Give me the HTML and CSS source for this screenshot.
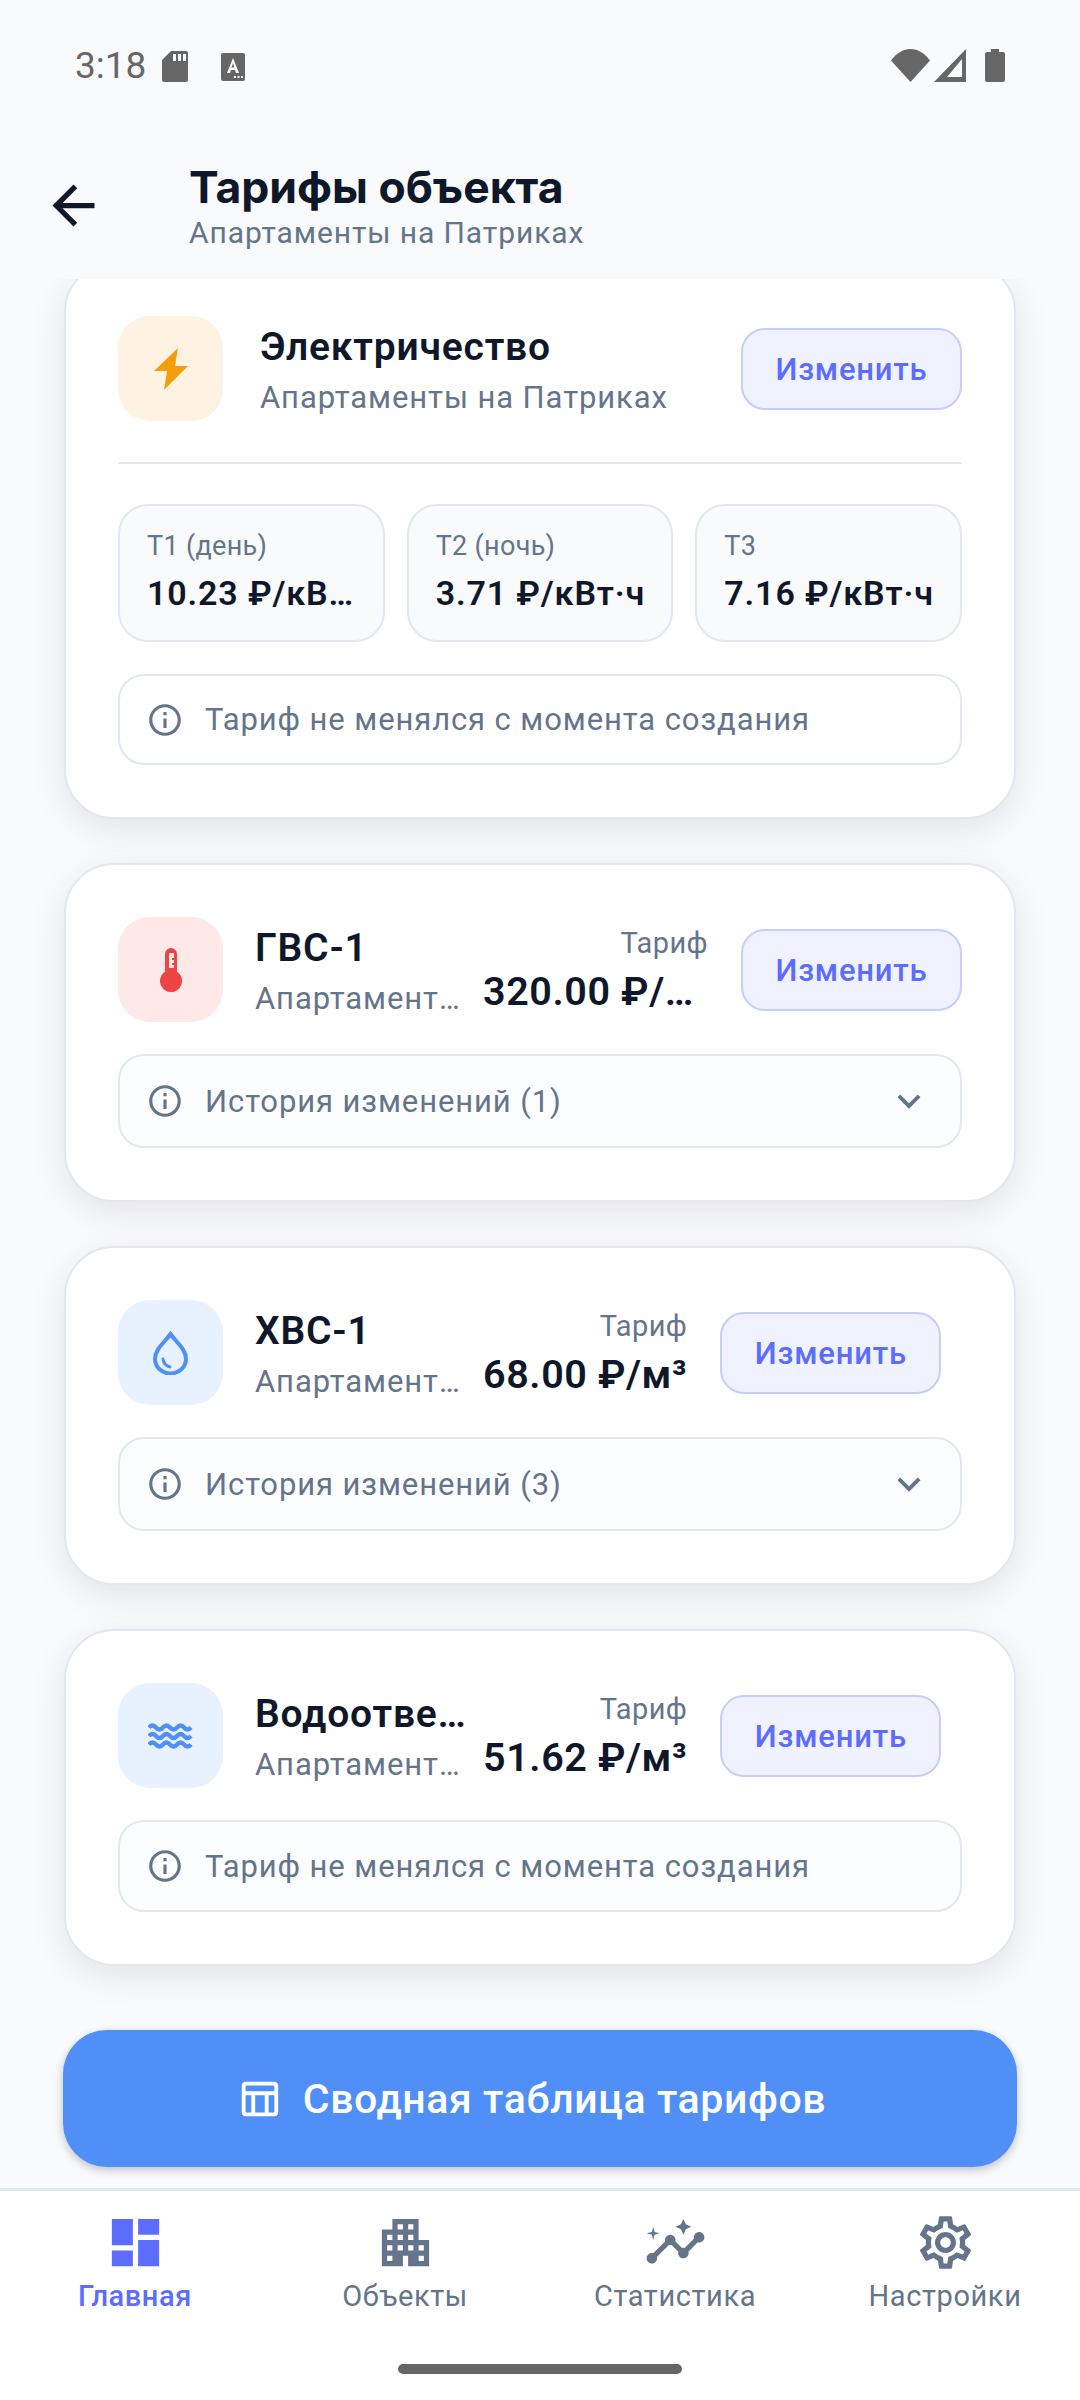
FILE: index.html
```html
<!DOCTYPE html>
<html lang="ru">
<head>
  <meta charset="UTF-8">
  <title>Тарифы объекта</title>
  <link rel="stylesheet" href="styles.css">
</head>
<body>
  <div class="screen">

    <div class="statusbar">
      <span class="clock">3:18</span>
      <svg class="st-sd" viewBox="0 0 26 31"><path d="M9 0h15a2 2 0 0 1 2 2v27a2 2 0 0 1-2 2H2a2 2 0 0 1-2-2V9z" fill="#666"/><path d="M11 3h3v7h-3zM16 3h3v7h-3zM21 3h3v7h-3z" fill="#f8fafc"/></svg>
      <svg class="st-a" viewBox="0 0 24 28"><rect width="24" height="28" rx="2" fill="#666"/><path d="M12 5l6 15h-3l-1-3h-4l-1 3H6zm0 5l-1.300 4.500h2.600z" fill="#f8fafc"/><path d="M13 23h2v2h-2zM16.500 23h2v2h-2zM20 23h2v2h-2z" fill="#f8fafc"/></svg>
      <span class="st-gap"></span>
      <svg class="st-wifi" viewBox="0 0 39 33"><path d="M19.500 33L0 11.500C5 4.500 12 0 19.500 0S34 4.500 39 11.500z" fill="#666"/></svg>
      <svg class="st-signal" viewBox="0 0 32 33"><path fill-rule="evenodd" d="M32 0v33H0zM28 10L13 28h15z" fill="#666"/></svg>
      <svg class="st-batt" viewBox="0 0 20 33"><path d="M6 0h8v3h4a2 2 0 0 1 2 2v26a2 2 0 0 1-2 2H2a2 2 0 0 1-2-2V5a2 2 0 0 1 2-2h4z" fill="#666"/></svg>
    </div>

    <div class="topbar">
      <svg class="back" viewBox="0 0 24 24"><path d="M20 11H7.830l5.590-5.590L12 4l-8 8 8 8 1.410-1.410L7.830 13H20v-2z"/></svg>
      <div class="topbar-text">
        <div class="page-title">Тарифы объекта</div>
        <div class="page-sub">Апартаменты на Патриках</div>
      </div>
    </div>

    <div class="content">
      <div class="list">

        <div class="card">
          <div class="card-head">
            <div class="type-icon amber">
              <svg viewBox="0 0 36 44" class="ic-bolt"><path d="M25 1L1 24h13l-3 19 24-24H22z"/></svg>
            </div>
            <div class="name-col wide">
              <div class="name">Электричество</div>
              <div class="place">Апартаменты на Патриках</div>
            </div>
            <button class="edit">Изменить</button>
          </div>
          <div class="divider"></div>
          <div class="rates">
            <div class="rate">
              <div class="rate-label">T1 (день)</div>
              <div class="rate-value">10.23 ₽/кВт·ч</div>
            </div>
            <div class="rate">
              <div class="rate-label">T2 (ночь)</div>
              <div class="rate-value">3.71 ₽/кВт·ч</div>
            </div>
            <div class="rate">
              <div class="rate-label">T3</div>
              <div class="rate-value">7.16 ₽/кВт·ч</div>
            </div>
          </div>
          <div class="note plain">
            <svg class="info" viewBox="0 0 24 24"><path d="M11 7h2v2h-2zm0 4h2v6h-2zm1-9C6.480 2 2 6.480 2 12s4.480 10 10 10 10-4.480 10-10S17.520 2 12 2zm0 18c-4.410 0-8-3.590-8-8s3.590-8 8-8 8 3.590 8 8-3.590 8-8 8z"/></svg>
            <span>Тариф не менялся с момента создания</span>
          </div>
        </div>

        <div class="card">
          <div class="card-head">
            <div class="type-icon red">
              <svg viewBox="0 0 22 44" class="ic-therm"><path fill-rule="evenodd" d="M11 0a6 6 0 0 1 6 6v17.800a11 11 0 1 1-12 0V6a6 6 0 0 1 6-6zM9 5v15h5v-3h-2v-2h2v-3h-2v-2h2V5z"/></svg>
            </div>
            <div class="name-col">
              <div class="name">ГВС-1</div>
              <div class="place">Апартаменты на Патриках</div>
            </div>
            <div class="price">
              <div class="price-label">Тариф</div>
              <div class="price-value">320.00 ₽/кВт·ч</div>
            </div>
            <button class="edit">Изменить</button>
          </div>
          <div class="note history">
            <svg class="info" viewBox="0 0 24 24"><path d="M11 7h2v2h-2zm0 4h2v6h-2zm1-9C6.480 2 2 6.480 2 12s4.480 10 10 10 10-4.480 10-10S17.520 2 12 2zm0 18c-4.410 0-8-3.590-8-8s3.590-8 8-8 8 3.590 8 8-3.590 8-8 8z"/></svg>
            <span>История изменений (1)</span>
            <svg class="chev" viewBox="0 0 24 24"><path d="M16.590 8.590L12 13.170 7.410 8.590 6 10l6 6 6-6z"/></svg>
          </div>
        </div>

        <div class="card">
          <div class="card-head">
            <div class="type-icon blue">
              <svg viewBox="0 0 35 44" class="ic-drop"><path d="M17.500 3C12 11 2 18 2 28a15.500 14.500 0 0 0 31 0C33 18 23 11 17.500 3z" fill="none" stroke-width="4"/><path d="M10 28c.5 4 3 7 7 8" fill="none" stroke-width="3" stroke-linecap="round"/></svg>
            </div>
            <div class="name-col">
              <div class="name">ХВС-1</div>
              <div class="place">Апартаменты на Патриках</div>
            </div>
            <div class="price">
              <div class="price-label">Тариф</div>
              <div class="price-value">68.00 ₽/м³</div>
            </div>
            <button class="edit">Изменить</button>
          </div>
          <div class="note history">
            <svg class="info" viewBox="0 0 24 24"><path d="M11 7h2v2h-2zm0 4h2v6h-2zm1-9C6.480 2 2 6.480 2 12s4.480 10 10 10 10-4.480 10-10S17.520 2 12 2zm0 18c-4.410 0-8-3.590-8-8s3.590-8 8-8 8 3.590 8 8-3.590 8-8 8z"/></svg>
            <span>История изменений (3)</span>
            <svg class="chev" viewBox="0 0 24 24"><path d="M16.590 8.590L12 13.170 7.410 8.590 6 10l6 6 6-6z"/></svg>
          </div>
        </div>

        <div class="card">
          <div class="card-head">
            <div class="type-icon blue">
              <svg viewBox="0 0 45 26" class="ic-waves"><path d="M1 4.500q3.500-4 7 0t7 0 7 0 7 0 7 0 7 0M1 13q3.500-4 7 0t7 0 7 0 7 0 7 0 7 0M1 21.500q3.500-4 7 0t7 0 7 0 7 0 7 0 7 0" fill="none" stroke-width="4.300"/></svg>
            </div>
            <div class="name-col">
              <div class="name">Водоотведение</div>
              <div class="place">Апартаменты на Патриках</div>
            </div>
            <div class="price">
              <div class="price-label">Тариф</div>
              <div class="price-value">51.62 ₽/м³</div>
            </div>
            <button class="edit">Изменить</button>
          </div>
          <div class="note tinted">
            <svg class="info" viewBox="0 0 24 24"><path d="M11 7h2v2h-2zm0 4h2v6h-2zm1-9C6.480 2 2 6.480 2 12s4.480 10 10 10 10-4.480 10-10S17.520 2 12 2zm0 18c-4.410 0-8-3.590-8-8s3.590-8 8-8 8 3.590 8 8-3.590 8-8 8z"/></svg>
            <span>Тариф не менялся с момента создания</span>
          </div>
        </div>

      </div>

      <button class="summary">
        <svg viewBox="0 0 24 24"><path d="M20 3H5c-1.100 0-2 .9-2 2v14c0 1.100.9 2 2 2h15c1.100 0 2-.9 2-2V5c0-1.100-.9-2-2-2zm0 2v3H5V5h15zm-5 14h-5v-9h5v9zM5 10h3v9H5v-9zm12 9v-9h3v9h-3z"/></svg>
        <span>Сводная таблица тарифов</span>
      </button>
    </div>

    <div class="nav">
      <div class="nav-item active">
        <svg viewBox="0 0 24 24"><path d="M3 13h8V3H3v10zm0 8h8v-6H3v6zm10 0h8V11h-8v10zm0-18v6h8V3h-8z"/></svg>
        <span>Главная</span>
      </div>
      <div class="nav-item">
        <svg viewBox="0 0 24 24"><path d="M17 11V3H7v4H3v14h8v-4h2v4h8V11h-4zM7 19H5v-2h2v2zm0-4H5v-2h2v2zm0-4H5V9h2v2zm4 4H9v-2h2v2zm0-4H9V9h2v2zm0-4H9V5h2v2zm4 8h-2v-2h2v2zm0-4h-2V9h2v2zm0-4h-2V5h2v2zm4 12h-2v-2h2v2zm0-4h-2v-2h2v2z"/></svg>
        <span>Объекты</span>
      </div>
      <div class="nav-item">
        <svg viewBox="0 0 24 24"><path d="M21 8c-1.450 0-2.260 1.440-1.930 2.510l-3.550 3.560c-.3-.09-.74-.09-1.040 0l-2.550-2.550C12.270 10.450 11.460 9 10 9c-1.450 0-2.270 1.440-1.930 2.520l-4.560 4.550C2.440 15.740 1 16.550 1 18c0 1.100.9 2 2 2 1.450 0 2.260-1.440 1.930-2.510l4.550-4.560c.3.09.74.09 1.040 0l2.550 2.550C12.730 16.550 13.540 18 15 18c1.450 0 2.270-1.440 1.930-2.520l3.560-3.550c1.070.33 2.510-.48 2.510-1.930 0-1.100-.9-2-2-2z"/><path d="M15 9l.94-2.070L18 6l-2.060-.93L15 3l-.92 2.070L12 6l2.080.93z"/><path d="M3.500 11L4 9l2-.5L4 8l-.5-2L3 8l-2 .5L3 9z"/></svg>
        <span>Статистика</span>
      </div>
      <div class="nav-item">
        <svg viewBox="0 0 24 24"><path d="M19.430 12.980c.04-.32.07-.64.07-.98 0-.34-.03-.66-.07-.98l2.110-1.650c.19-.15.24-.42.12-.64l-2-3.460c-.09-.16-.26-.25-.44-.25-.06 0-.12.01-.17.03l-2.490 1c-.52-.4-1.080-.73-1.690-.98l-.38-2.650C14.460 2.180 14.250 2 14 2h-4c-.25 0-.46.18-.49.42l-.38 2.650c-.61.25-1.170.59-1.690.98l-2.490-1c-.06-.02-.12-.03-.18-.03-.17 0-.34.09-.43.25l-2 3.460c-.13.22-.07.49.12.64l2.110 1.650c-.04.32-.07.65-.07.98 0 .33.03.66.07.98l-2.110 1.650c-.19.15-.24.42-.12.64l2 3.460c.09.16.26.25.44.25.06 0 .12-.01.17-.03l2.490-1c.52.4 1.080.73 1.690.98l.38 2.650c.03.24.24.42.49.42h4c.25 0 .46-.18.49-.42l.38-2.650c.61-.25 1.170-.59 1.690-.98l2.490 1c.06.02.12.03.18.03.17 0 .34-.09.43-.25l2-3.460c.12-.22.07-.49-.12-.64l-2.110-1.650zm-1.980-1.710c.04.31.05.52.05.73 0 .21-.02.43-.05.73l-.14 1.130.89.7 1.080.84-.7 1.210-1.270-.51-1.040-.42-.9.68c-.43.32-.84.56-1.250.73l-1.060.43-.16 1.130-.2 1.350h-1.400l-.19-1.350-.16-1.130-1.060-.43c-.43-.18-.83-.41-1.230-.71l-.91-.7-1.060.43-1.270.51-.7-1.210 1.080-.84.89-.7-.14-1.130c-.03-.31-.05-.54-.05-.74s.02-.43.05-.73l.14-1.130-.89-.7-1.080-.84.7-1.210 1.270.51 1.040.42.9-.68c.43-.32.84-.56 1.250-.73l1.060-.43.16-1.130.2-1.350h1.390l.19 1.350.16 1.130 1.060.43c.43.18.83.41 1.230.71l.91.7 1.060-.43 1.270-.51.7 1.210-1.070.85-.89.7.14 1.130zM12 8c-2.210 0-4 1.790-4 4s1.790 4 4 4 4-1.790 4-4-1.790-4-4-4zm0 6c-1.100 0-2-.9-2-2s.9-2 2-2 2 .9 2 2-.9 2-2 2z"/></svg>
        <span>Настройки</span>
      </div>
    </div>

    <div class="gesture"><div class="gesture-bar"></div></div>

  </div>
</body>
</html>
```

FILE: styles.css
```css
:root {
  --ink: #0f172a;
  --muted: #64748b;
  --line: #e2e8f0;
  --indigo: #5b6cff;
  --page: #f8fafc;
}

* {
  box-sizing: border-box;
}

body {
  margin: 0;
  font-family: Roboto, sans-serif;
  background-color: var(--page);
}

.screen {
  width: 1080px;
  height: 2400px;
  display: flex;
  flex-direction: column;
  overflow: hidden;
  background-color: var(--page);
}

/* status bar */
.statusbar {
  height: 132px;
  flex-shrink: 0;
  display: flex;
  align-items: flex-start;
  padding: 49px 75px 0 75px;
  position: relative;
  z-index: 2;
  background-color: var(--page);
}

.clock {
  font-size: 37px;
  line-height: 34px;
  color: #666;
  width: 87px;
}

.st-sd {
  width: 26px;
  height: 31px;
  margin-top: 2px;
  margin-right: 33px;
}

.st-a {
  width: 24px;
  height: 28px;
  margin-top: 4px;
}

.st-gap {
  flex: 1;
}

.st-wifi {
  width: 39px;
  height: 33px;
  margin-right: 4px;
}

.st-signal {
  width: 32px;
  height: 33px;
  margin-right: 19px;
}

.st-batt {
  width: 20px;
  height: 33px;
}

/* header */
.topbar {
  height: 147px;
  flex-shrink: 0;
  display: flex;
  align-items: flex-start;
  position: relative;
  z-index: 2;
  background-color: var(--page);
  padding-left: 42px;
}

.back {
  width: 63px;
  height: 63px;
  fill: var(--ink);
  margin-top: 42px;
  margin-right: 84px;
}

.topbar-text {
  padding-top: 26px;
}

.page-title {
  font-family: Inter, sans-serif;
  font-size: 44.5px;
  line-height: 58px;
  font-weight: 700;
  color: var(--ink);
}

.page-sub {
  font-size: 30px;
  line-height: 34px;
  color: var(--muted);
  letter-spacing: 0.9px;
}

/* scrolled content */
.content {
  flex: 1;
  min-height: 0;
  display: flex;
  flex-direction: column;
  padding: 0 63px;
}

.list {
  display: flex;
  flex-direction: column;
  gap: 44px;
  margin-top: -17px;
  padding: 0 1px;
}

.card {
  background-color: #fff;
  border: 2px solid var(--line);
  border-radius: 50px;
  padding: 52px;
  box-shadow: 0 10px 36px rgba(0, 0, 0, 0.09);
}

.card-head {
  display: flex;
  align-items: center;
}

.type-icon {
  width: 105px;
  height: 105px;
  flex-shrink: 0;
  border-radius: 32px;
  display: flex;
  align-items: center;
  justify-content: center;
}

.amber { background-color: #fef3e2; }
.red { background-color: #fee8e8; }
.blue { background-color: #e8f1fe; }

.ic-bolt {
  width: 36px;
  height: 44px;
  fill: #f59e0b;
}

.ic-therm {
  width: 22px;
  height: 44px;
  fill: #ef4444;
}

.ic-drop {
  width: 35px;
  height: 44px;
  stroke: #4f8ff7;
}

.ic-waves {
  width: 45px;
  height: 26px;
  stroke: #4f8ff7;
}

.name-col {
  width: 244px;
  flex-shrink: 0;
  min-width: 0;
  padding-left: 32px;
  padding-top: 3px;
}

.name-col.wide {
  flex: 1;
  padding-left: 37px;
}

.name {
  font-size: 39px;
  line-height: 56px;
  font-weight: 600;
  letter-spacing: 0.8px;
  color: var(--ink);
  white-space: nowrap;
  overflow: hidden;
  text-overflow: ellipsis;
}

.place {
  font-size: 31px;
  line-height: 46px;
  letter-spacing: 0.9px;
  color: var(--muted);
  white-space: nowrap;
  overflow: hidden;
  text-overflow: ellipsis;
}

.price {
  margin-left: 16px;
  max-width: 225px;
  min-width: 0;
  padding-top: 3px;
  text-align: right;
  flex-shrink: 0;
}

.price-label {
  font-size: 29px;
  line-height: 38px;
  letter-spacing: 0.4px;
  color: var(--muted);
}

.price-value {
  margin-top: 3px;
  font-size: 39.5px;
  line-height: 54px;
  font-weight: 600;
  letter-spacing: 0.6px;
  color: var(--ink);
  white-space: nowrap;
  overflow: hidden;
  text-overflow: ellipsis;
}

.edit {
  width: 221px;
  height: 82px;
  flex-shrink: 0;
  margin-left: 33px;
  padding-top: 3px;
  border: 2px solid #c7cdff;
  border-radius: 24px;
  background-color: #f1f2ff;
  color: var(--indigo);
  font-family: inherit;
  font-size: 31px;
  font-weight: 500;
  letter-spacing: 0.8px;
}

.name-col.wide + .edit {
  margin-left: 0;
}

.divider {
  height: 2px;
  background-color: var(--line);
  margin: 41px 0 40px;
}

.rates {
  display: grid;
  grid-template-columns: repeat(3, 1fr);
  gap: 22px;
  margin-bottom: 32px;
}

.rate {
  height: 138px;
  min-width: 0;
  border: 2px solid var(--line);
  border-radius: 30px;
  background-color: var(--page);
  padding: 23px 20px 0 27px;
}

.rate-label {
  font-size: 27px;
  line-height: 34px;
  letter-spacing: 0.3px;
  color: var(--muted);
}

.rate-value {
  margin-top: 8px;
  font-size: 34px;
  line-height: 44px;
  font-weight: 600;
  letter-spacing: 0.85px;
  color: var(--ink);
  white-space: nowrap;
  overflow: hidden;
  text-overflow: ellipsis;
}

.note {
  display: flex;
  align-items: center;
  border: 2px solid var(--line);
  border-radius: 26px;
  padding: 0 28px 0 26px;
  font-size: 31px;
  letter-spacing: 0.9px;
  color: var(--muted);
}

.card-head + .note {
  margin-top: 32px;
}

.plain {
  height: 91px;
  background-color: #fff;
}

.tinted {
  height: 92px;
  background-color: #fcfdfe;
}

.history {
  height: 94px;
  background-color: #fcfdfe;
}

.info {
  width: 38px;
  height: 38px;
  fill: var(--muted);
  flex-shrink: 0;
  margin-right: 21px;
}

.chev {
  width: 46px;
  height: 46px;
  fill: var(--muted);
  margin-left: auto;
}

/* summary button */
.summary {
  height: 137px;
  flex-shrink: 0;
  margin-top: 64px;
  padding: 0 18px 0 0;
  border: none;
  border-radius: 44px;
  background-color: #4f8ff7;
  box-shadow: 0 3px 8px rgba(15, 23, 42, 0.25);
  color: #fff;
  display: flex;
  align-items: center;
  justify-content: center;
  font-family: inherit;
  font-size: 41px;
  font-weight: 500;
  letter-spacing: 0.6px;
}

.summary svg {
  width: 46px;
  height: 46px;
  fill: #fff;
  margin-right: 21px;
}

/* bottom nav */
.nav {
  height: 132px;
  flex-shrink: 0;
  display: grid;
  grid-template-columns: repeat(4, 1fr);
  border-top: 3px solid var(--line);
  background-color: #fff;
  position: relative;
  z-index: 2;
  padding-top: 20px;
}

.nav-item {
  display: flex;
  flex-direction: column;
  align-items: center;
  color: var(--muted);
  font-size: 29px;
  line-height: 36px;
  letter-spacing: 0.6px;
}

.nav-item svg {
  width: 63px;
  height: 63px;
  fill: var(--muted);
  margin-bottom: 4px;
}

.nav-item.active {
  color: var(--indigo);
  font-weight: 500;
}

.nav-item.active svg {
  fill: var(--indigo);
}

.gesture {
  flex: none;
  height: 80px;
  background-color: #fff;
  display: flex;
  justify-content: center;
  padding-top: 44px;
}

.gesture-bar {
  width: 284px;
  height: 10px;
  border-radius: 5px;
  background-color: #666;
}
```
